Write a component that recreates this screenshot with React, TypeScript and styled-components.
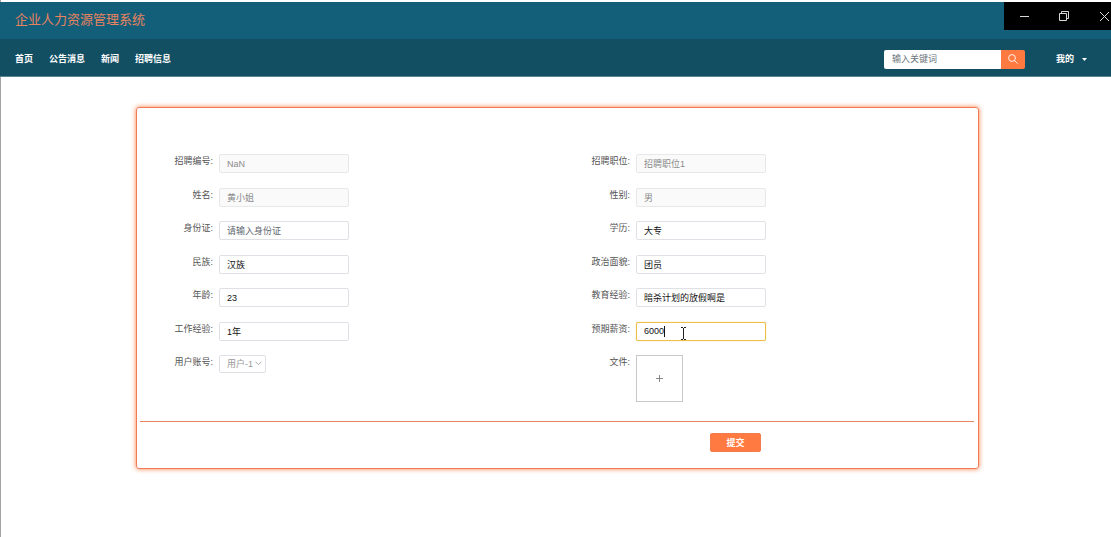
import React from "react";
import styled, { createGlobalStyle, css } from "styled-components";

const GlobalStyle = createGlobalStyle`
  *, *::before, *::after { box-sizing: border-box; }
  body {
    margin: 0;
    background: #fff;
    color: #555;
    font-family: "Liberation Sans", "Noto Sans CJK SC", sans-serif;
    font-size: 9px;
    line-height: 14px;
  }
  input, button, select { font: inherit; margin: 0; }
`;

const Page = styled.div`
  min-height: 100vh;
  padding-top: 2px;
  border-left: 1px solid #a3a3a3;
`;

const TitleBar = styled.header`
  display: flex;
  justify-content: space-between;
  align-items: flex-start;
  height: 37px;
  margin-left: -1px;
  padding-left: 15px;
  background: #135f7a;
`;

const SiteTitle = styled.h1`
  margin: 0;
  color: #e8835f;
  font-size: 13px;
  font-weight: 400;
  line-height: 36px;
`;

const WindowControls = styled.div`
  display: flex;
  width: 107px;
  height: 28px;
  overflow: hidden;
  background: #000;
`;

const WindowButton = styled.button`
  flex: 0 0 40px;
  display: grid;
  place-items: center;
  padding: 0;
  border: 0;
  background: none;
  color: #d8d8d8;
`;

const NavBar = styled.nav`
  display: flex;
  align-items: center;
  height: 38px;
  margin-left: -1px;
  padding: 3px 24px 0 15px;
  background: #124f63;
  border-bottom: 1px solid #5a8494;
`;

const NavLinks = styled.div`
  flex: 1;
  display: flex;
  gap: 16px;
`;

const NavLink = styled.a`
  color: #fff;
  font-weight: 700;
  text-decoration: none;
`;

const SearchBox = styled.form`
  display: flex;
  width: 141px;
  height: 19px;
  margin-right: 31px;
  border-radius: 2px;
  overflow: hidden;
`;

const SearchInput = styled.input`
  flex: 1;
  min-width: 0;
  padding: 0 8px;
  border: 0;
  background: #fff;
  &::placeholder { color: #6c757d; opacity: 1; }
`;

const SearchButton = styled.button`
  display: grid;
  place-items: center;
  width: 24px;
  padding: 0;
  border: 0;
  background: #ff7a40;
  color: #fff;
`;

const UserMenu = styled.button`
  display: flex;
  align-items: center;
  gap: 8px;
  padding: 0;
  border: 0;
  background: none;
  color: #fff;
  font-weight: 700;
`;

const Main = styled.main`
  padding: 30px 132px 32px 135px;
`;

const Card = styled.form`
  padding: 46px 4px 16px 3px;
  border: 1px solid #ee7b55;
  border-radius: 3px;
  box-shadow: 0 0 5px #ff7a40;
`;

const Columns = styled.div`
  display: grid;
  grid-template-columns: 1fr 1fr;
`;

const FieldColumn = styled.div`
  display: grid;
  grid-template-rows: repeat(6, 1fr) auto;
  min-height: 248px;
`;

const Row = styled.div<{ $tall?: boolean }>`
  display: grid;
  grid-template-columns: 73px auto;
  column-gap: 6px;
  justify-content: start;
  align-items: start;
  min-height: ${(p) => (p.$tall ? "47px" : "20px")};
`;

const Label = styled.label`
  text-align: right;
  color: #555;
`;

const Control = styled.div`
  position: relative;
`;

const boxStyle = css`
  border: 1px solid #dfe1e6;
  border-radius: 2px;
  background: #fff;
`;

const TextInput = styled.input<{ $active?: boolean }>`
  ${boxStyle}
  display: block;
  width: 130px;
  height: 19px;
  padding: 0 7px;
  color: #111;
  ${(p) => p.$active && css`
    border-color: #eebf4a;
    box-shadow: 0 0 1px #eebf4a;
  `}
  &::placeholder { color: #5f6872; opacity: 1; }
  &:disabled { background: #fafafa; color: #8a8a8a; border-color: #e6e8ea; }
`;

const AccountSelect = styled.select`
  ${boxStyle}
  display: block;
  appearance: none;
  width: 47px;
  height: 18px;
  padding: 0 0 0 7px;
  &:disabled { color: #999; opacity: 1; }
`;

const SelectArrow = styled.svg`
  position: absolute;
  top: 6px;
  right: 4px;
  pointer-events: none;
`;

const Upload = styled.button`
  display: grid;
  place-items: center;
  width: 47px;
  height: 47px;
  padding: 0;
  border: 1px solid #c8c8c8;
  background: #fff;
  color: #888;
`;

const Caret = styled.span`
  position: absolute;
  top: 4px;
  left: 28px;
  width: 1px;
  height: 11px;
  background: #111;
`;

const TextCursor = styled.svg`
  position: absolute;
  top: 5px;
  left: 44px;
  pointer-events: none;
`;

const Divider = styled.hr`
  margin: 19px 0 11px;
  border: 0;
  border-top: 1px solid #ea8460;
`;

const SubmitButton = styled.button`
  grid-column: 2;
  justify-self: start;
  width: 51px;
  height: 19px;
  margin-left: 153px;
  padding: 0;
  border: 1px solid #f27c4c;
  border-radius: 2px;
  background: #ff7a40;
  color: #fff;
  font-weight: 700;
`;

type Field = {
  id: string;
  label: string;
  value?: string;
  placeholder?: string;
  disabled?: boolean;
  active?: boolean;
};

const leftFields: Field[] = [
  { id: "number", label: "招聘编号", value: "NaN", disabled: true },
  { id: "name", label: "姓名", value: "黄小姐", disabled: true },
  { id: "idcard", label: "身份证", placeholder: "请输入身份证" },
  { id: "nation", label: "民族", value: "汉族" },
  { id: "age", label: "年龄", value: "23" },
  { id: "work", label: "工作经验", value: "1年" },
];

const rightFields: Field[] = [
  { id: "position", label: "招聘职位", value: "招聘职位1", disabled: true },
  { id: "gender", label: "性别", value: "男", disabled: true },
  { id: "degree", label: "学历", value: "大专" },
  { id: "politics", label: "政治面貌", value: "团员" },
  { id: "education", label: "教育经验", value: "暗杀计划的放假啊是" },
  { id: "salary", label: "预期薪资", value: "6000", active: true },
];

function FieldRow({ id, label, value, placeholder, disabled, active }: Field) {
  return (
    <Row>
      <Label htmlFor={id}>{label}:</Label>
      <Control>
        <TextInput
          id={id}
          type="text"
          defaultValue={value}
          placeholder={placeholder}
          disabled={disabled}
          $active={active}
        />
        {active && (
          <>
            <Caret />
            <TextCursor width="7" height="13" viewBox="0 0 7 13" fill="none" stroke="#222" aria-hidden="true">
              <path d="M1 .5h2M4 .5h2M3.5 1v11M1 12.5h2M4 12.5h2" />
            </TextCursor>
          </>
        )}
      </Control>
    </Row>
  );
}

export default function App() {
  return (
    <>
      <GlobalStyle />
      <Page>
        <TitleBar>
          <SiteTitle>企业人力资源管理系统</SiteTitle>
          <WindowControls>
            <WindowButton type="button" aria-label="最小化">
              <svg width="9" height="9" viewBox="0 0 9 9" fill="none" stroke="currentColor">
                <path d="M0 4.5h9" />
              </svg>
            </WindowButton>
            <WindowButton type="button" aria-label="还原">
              <svg width="10" height="10" viewBox="0 0 10 10" fill="none" stroke="currentColor">
                <path d="M.5 2.5h7v7h-7zM2.5 2.5v-2h7v7h-2" />
              </svg>
            </WindowButton>
            <WindowButton type="button" aria-label="关闭">
              <svg width="9" height="9" viewBox="0 0 9 9" fill="none" stroke="currentColor">
                <path d="M0 0l9 9M9 0L0 9" />
              </svg>
            </WindowButton>
          </WindowControls>
        </TitleBar>
        <NavBar>
          <NavLinks>
            <NavLink href="#home">首页</NavLink>
            <NavLink href="#notice">公告消息</NavLink>
            <NavLink href="#news">新闻</NavLink>
            <NavLink href="#jobs">招聘信息</NavLink>
          </NavLinks>
          <SearchBox>
            <SearchInput type="text" placeholder="输入关键词" aria-label="输入关键词" />
            <SearchButton type="button" aria-label="搜索">
              <svg width="10" height="10" viewBox="0 0 10 10" fill="none" stroke="currentColor" strokeWidth=".9">
                <circle cx="4" cy="4" r="3.4" />
                <path d="M6.5 6.5L9.6 9.6" />
              </svg>
            </SearchButton>
          </SearchBox>
          <UserMenu type="button">
            我的
            <svg width="5" height="3" viewBox="0 0 5 3" fill="currentColor" aria-hidden="true">
              <path d="M0 0h5L2.5 3z" />
            </svg>
          </UserMenu>
        </NavBar>
        <Main>
          <Card>
            <Columns>
              <FieldColumn>
                {leftFields.map((f) => <FieldRow key={f.id} {...f} />)}
                <Row $tall>
                  <Label htmlFor="account">用户账号:</Label>
                  <Control>
                    <AccountSelect id="account" disabled>
                      <option>用户-1</option>
                    </AccountSelect>
                    <SelectArrow width="7" height="5" viewBox="0 0 7 5" fill="none" stroke="#aaa" aria-hidden="true">
                      <path d="M.5 .7l3 3 3-3" />
                    </SelectArrow>
                  </Control>
                </Row>
              </FieldColumn>
              <FieldColumn>
                {rightFields.map((f) => <FieldRow key={f.id} {...f} />)}
                <Row $tall>
                  <Label htmlFor="file">文件:</Label>
                  <Upload id="file" type="button" aria-label="上传文件">
                    <svg width="7" height="7" viewBox="0 0 7 7" fill="none" stroke="currentColor">
                      <path d="M0 3.5h7M3.5 0v7" />
                    </svg>
                  </Upload>
                </Row>
              </FieldColumn>
            </Columns>
            <Divider />
            <Columns>
              <SubmitButton type="button">提交</SubmitButton>
            </Columns>
          </Card>
        </Main>
      </Page>
    </>
  );
}
